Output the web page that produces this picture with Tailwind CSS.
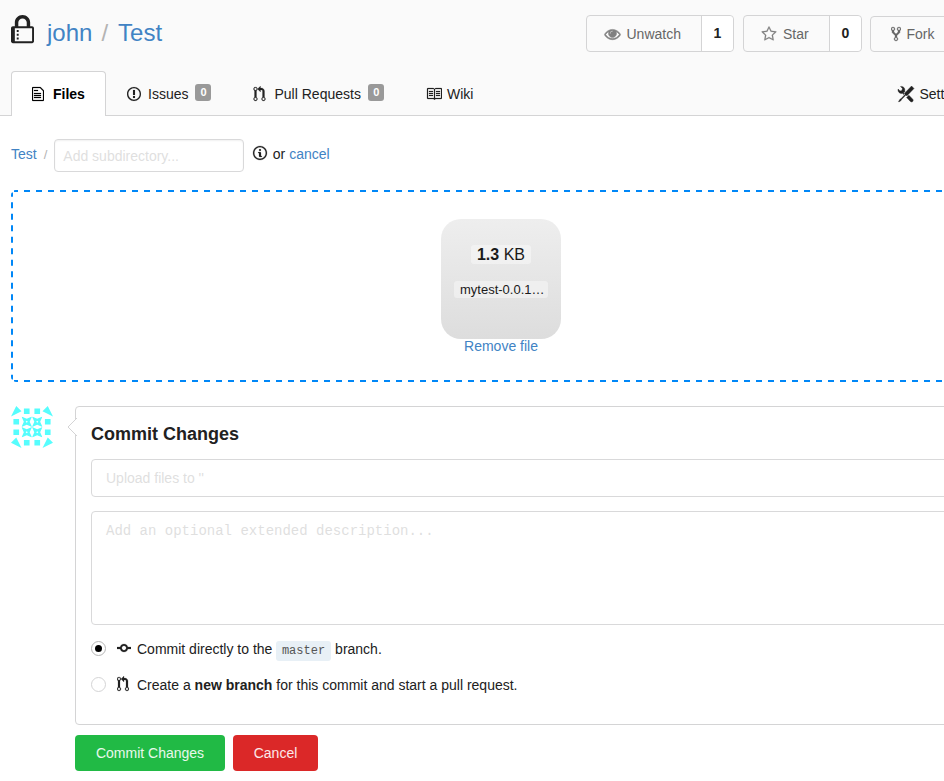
<!DOCTYPE html>
<html lang="en">
<head>
<meta charset="utf-8">
<title>john/Test</title>
<script src="https://cdn.jsdelivr.net/npm/@tailwindcss/browser@4"></script>
</head>
<body class="h-[781px] w-[944px] overflow-hidden bg-white font-['Liberation_Sans',Arial,sans-serif] text-[14px] leading-5 text-[#212121]">
<svg class="hidden">
  <symbol id="pr" viewBox="0 0 12 16"><path d="M11 11.28V5c-.03-.78-.34-1.47-.94-2.06C9.46 2.35 8.78 2.03 8 2H7V0L4 3l3 3V4h1c.27.02.48.11.69.31.21.2.3.42.31.69v6.28A1.993 1.993 0 0 0 10 15a1.993 1.993 0 0 0 1-3.72zm-1 2.92c-.66 0-1.2-.55-1.2-1.2 0-.65.55-1.2 1.2-1.2.65 0 1.2.55 1.2 1.2 0 .65-.55 1.2-1.2 1.2zM4 3c0-1.11-.89-2-2-2a1.993 1.993 0 0 0-1 3.72v6.56A1.993 1.993 0 0 0 2 15a1.993 1.993 0 0 0 1-3.72V4.72c.59-.34 1-.98 1-1.72zm-.8 10c0 .66-.55 1.2-1.2 1.2-.65 0-1.2-.55-1.2-1.2 0-.65.55-1.2 1.2-1.2.65 0 1.2.55 1.2 1.2zM2 4.2C1.34 4.2.8 3.65.8 3c0-.65.55-1.2 1.2-1.2.65 0 1.2.55 1.2 1.2 0 .65-.55 1.2-1.2 1.2z"/></symbol>
  <symbol id="xcell" viewBox="0 0 10 10"><path fill-rule="evenodd" d="M0 0L5 2.2L10 0L7.8 5L10 10L5 7.8L0 10L2.2 5ZM5 4L4 5L5 6L6 5Z"/></symbol>
</svg>

<header class="h-[116px] border-b border-[#d4d4d5] bg-[#fafafa] pl-[11px]">
  <div class="flex h-[71px] w-[1000px] items-start pt-[14px]">
    <svg class="mt-px h-[30px] w-[23px] shrink-0 fill-current" viewBox="0 0 12 16" preserveAspectRatio="none"><path d="M4 13H3v-1h1v1zm8-6v7c0 .55-.45 1-1 1H1c-.55 0-1-.45-1-1V7c0-.55.45-1 1-1h1V4c0-2.2 1.8-4 4-4s4 1.8 4 4v2h1c.55 0 1 .45 1 1zM3.8 6h4.41V4c0-1.22-.98-2.2-2.2-2.2-1.22 0-2.2.98-2.2 2.2v2H3.8zM11 7H2v7h9V7zM4 8H3v1h1V8zm0 2H3v1h1v-1z"/></svg>
    <h1 class="ml-[13px] flex w-[539px] pt-[2px] text-[24px] leading-[34px] text-[#4183c4]"><a>john</a><span class="mr-[10px] ml-[9px] text-[#b3b3b3]">/</span><a>Test</a></h1>
    <div class="mt-px flex h-[37px] w-[148px] shrink-0 rounded border border-[#d4d4d5] text-[#666]">
      <div class="flex flex-1 items-center pl-[17px]"><svg class="mr-[5.5px] h-4 w-[17px] overflow-visible fill-[#808080] stroke-[#808080] stroke-60" viewBox="0 0 1792 1792"><path d="M1664 960q-152-236-381-353 61 104 61 225 0 185-131.5 316.5t-316.5 131.5-316.5-131.5-131.5-316.5q0-121 61-225-229 117-381 353 133 205 333.5 326.5t434.5 121.5 434.5-121.5 333.5-326.5zm-720-384q0-20-14-34t-34-14q-125 0-214.5 89.5t-89.5 214.5q0 20 14 34t34 14 34-14 14-34q0-86 61-147t147-61q20 0 34-14t14-34zm848 384q0 34-20 69-140 230-376.5 368.5t-499.5 138.5-499.5-139-376.5-368q-20-35-20-69t20-69q140-229 376.5-368t499.5-139 499.5 139 376.5 368q20 35 20 69z"/></svg>Unwatch</div>
      <div class="w-[32px] rounded-r border-l border-[#d4d4d5] bg-white text-center font-bold leading-[34px] text-[#212121]">1</div>
    </div>
    <div class="mt-px ml-[9px] flex h-[37px] w-[119px] shrink-0 rounded border border-[#d4d4d5] text-[#666]">
      <div class="flex flex-1 items-center pl-[17px]"><svg class="mr-[6px] h-4 w-4 overflow-visible fill-[#808080] stroke-[#808080] stroke-20" viewBox="0 0 1792 1792"><path d="M1201 1004l306-297-422-62-189-382-189 382-422 62 306 297-73 421 378-199 377 199zm527-357q0 22-26 48l-363 354 86 500q1 7 1 20 0 50-41 50-19 0-40-12l-449-236-449 236q-22 12-40 12-21 0-31.5-14.5t-10.5-35.5q0-6 2-20l86-500-364-354q-25-27-25-48 0-37 56-46l502-73 225-455q19-41 49-41t49 41l225 455 502 73q56 9 56 46z"/></svg>Star</div>
      <div class="w-[32px] rounded-r border-l border-[#d4d4d5] bg-white text-center font-bold leading-[34px] text-[#212121]">0</div>
    </div>
    <div class="mt-[2px] ml-2 flex h-9 w-[110px] shrink-0 items-center rounded border border-[#d4d4d5] pl-5 text-[#666]"><svg class="mr-[5.5px] h-[16px] w-[10px] fill-current stroke-current stroke-[0.3]" viewBox="0 0 10 16"><path d="M8 1a1.993 1.993 0 0 0-1 3.72V6L5 8 3 6V4.72A1.993 1.993 0 0 0 2 1a1.993 1.993 0 0 0-1 3.72V6.5l3 3v1.78A1.993 1.993 0 0 0 5 15a1.993 1.993 0 0 0 1-3.72V9.5l3-3V4.72A1.993 1.993 0 0 0 8 1zM2 4.2C1.34 4.2.8 3.65.8 3c0-.65.55-1.2 1.2-1.2.65 0 1.2.55 1.2 1.2 0 .65-.55 1.2-1.2 1.2zm3 10c-.66 0-1.2-.55-1.2-1.2 0-.65.55-1.2 1.2-1.2.65 0 1.2.55 1.2 1.2 0 .65-.55 1.2-1.2 1.2zm3-10c-.66 0-1.2-.55-1.2-1.2 0-.65.55-1.2 1.2-1.2.65 0 1.2.55 1.2 1.2 0 .65-.55 1.2-1.2 1.2z"/></svg>Fork</div>
  </div>
  <nav class="flex h-[45px] w-[1000px] items-center whitespace-nowrap">
    <a class="flex h-[45px] w-[95px] items-center rounded-t border border-b-0 border-[#d4d4d5] bg-white pl-5 font-bold text-black"><svg class="mr-[9px] h-4 w-3 fill-current stroke-current stroke-[0.2]" viewBox="0 0 12 16"><path d="M6 5H2V4h4v1zM2 8h7V7H2v1zm0 2h7V9H2v1zm0 2h7v-1H2v1zm10-7.5V14c0 .55-.45 1-1 1H1c-.55 0-1-.45-1-1V2c0-.55.45-1 1-1h7.5L12 4.5zM11 5L8 2H1v12h10V5z"/></svg>Files</a>
    <a class="ml-[21px] flex w-[126px] items-center"><svg class="mr-[7px] h-4 w-[14px] fill-current stroke-current stroke-[0.1]" viewBox="0 0 14 16"><path d="M7 2.3c3.14 0 5.7 2.56 5.7 5.7s-2.56 5.7-5.7 5.7A5.71 5.71 0 0 1 1.3 8c0-3.14 2.56-5.7 5.7-5.7zM7 1C3.14 1 0 4.14 0 8s3.14 7 7 7 7-3.14 7-7-3.14-7-7-7zm1 3H6v5h2V4zm0 6H6v2h2v-2z"/></svg>Issues<span class="mb-[3px] ml-[7px] h-[17px] w-4 rounded-[3px] bg-[#999] text-center text-[11px] font-bold leading-[17px] text-white">0</span></a>
    <a class="flex w-[173px] items-center"><svg class="mr-[8.5px] h-4 w-[13px] fill-current stroke-current stroke-[0.2]"><use href="#pr"/></svg>Pull Requests<span class="mb-[3px] ml-[7.5px] h-[17px] w-4 rounded-[3px] bg-[#999] text-center text-[11px] font-bold leading-[17px] text-white">0</span></a>
    <a class="flex w-[472px] items-center"><svg class="mr-[5px] h-4 w-4 fill-current stroke-current stroke-[0.2]" viewBox="0 0 16 16"><path d="M3 5h4v1H3V5zm0 3h4V7H3v1zm0 2h4V9H3v1zm11-5h-4v1h4V5zm0 2h-4v1h4V7zm0 2h-4v1h4V9zm2-6v9c0 .55-.45 1-1 1H9.5l-1 1-1-1H2c-.55 0-1-.45-1-1V3c0-.55.45-1 1-1h5.5l1 1 1-1H15c.55 0 1 .45 1 1zm-8 .5L7.5 3H2v9h6V3.5zm7-.5H9.5l-.5.5V12h6V3z"/></svg>Wiki</a>
    <a class="flex items-center"><svg class="mr-[5.5px] h-4 w-4 overflow-visible fill-current stroke-current stroke-[0.4]" viewBox="0 0 16 16"><path d="M4.48 7.27c.26.26 1.28 1.33 1.28 1.33l.56-.58-.88-.91 1.69-1.8s-.76-.74-.43-.45c.32-1.19.03-2.51-.87-3.44C4.93.5 3.66.2 2.52.51l1.93 2-.51 1.96-1.89.52-1.93-1.99C-.19 4.17.1 5.48 1 6.4c.94.98 2.29 1.26 3.48.87zm6.44 1.94l-2.33 2.3 3.84 3.98c.31.33.73.49 1.14.49.41 0 .82-.16 1.14-.49.63-.65.63-1.7 0-2.35l-3.79-3.93zM16 2.53L13.55 0 6.33 7.46l.88.91-4.31 4.46-.99.53-1.39 2.27.35.37 2.2-1.44.51-1.02L7.9 9.08l.88.91L16 2.53z"/></svg>Settings</a>
  </nav>
</header>

<main class="w-[1000px] pl-[11px]">
  <div class="flex h-[74px] items-start pt-[23px]">
    <div class="flex leading-[31px] text-[#4183c4]">Test<span class="mx-[7px] text-[13px] text-[#b3b3b3]">/</span></div>
    <div class="h-[33px] w-[190px] rounded border border-[#d9d9da] pl-2 leading-[32px] text-[#dfdfdf] shadow-[inset_0_1px_2px_rgba(0,0,0,0.06)]">Add subdirectory...</div>
    <svg class="mt-[6px] mr-[5.5px] ml-[9px] h-4 w-[14px] overflow-visible fill-current stroke-current stroke-[0.2]" viewBox="0 0 14 16"><path d="M6.3 5.69a.942.942 0 0 1-.28-.7c0-.28.09-.52.28-.7.19-.18.42-.28.7-.28.28 0 .52.09.7.28.18.19.28.42.28.7 0 .28-.09.52-.28.7a1 1 0 0 1-.7.3c-.28 0-.52-.11-.7-.3zM8 7.99c-.02-.25-.11-.48-.31-.69-.2-.19-.42-.3-.69-.31H6c-.27.02-.48.13-.69.31-.2.2-.3.44-.31.69h1v3c.02.27.11.5.31.69.2.2.42.31.69.31h1c.27 0 .48-.11.69-.31.2-.19.3-.42.31-.69H8V7.98v.01zM7 2.3c-3.14 0-5.7 2.54-5.7 5.68 0 3.14 2.56 5.7 5.7 5.7s5.7-2.55 5.7-5.7c0-3.15-2.56-5.69-5.7-5.69v.01zM7 .98c3.86 0 7 3.14 7 7s-3.14 7-7 7-7-3.12-7-7 3.14-7 7-7z"/></svg>
    <div class="leading-[31px]">or <span class="text-[#4183c4]">cancel</span></div>
  </div>
  <div class="relative flex h-[192px] w-[980px] flex-col items-center overflow-hidden rounded-[5px] pt-[29px]">
    <svg class="absolute inset-0 h-[192px] w-[980px] fill-none stroke-[#0087f7] stroke-2"><path d="M3 1H980M3 191H980" stroke-dasharray="6 6" stroke-dashoffset="2"/><path d="M1 2.5V189.5" stroke-dasharray="6 5.5" stroke-dashoffset="1.75"/></svg>
    <div class="flex h-[120px] w-[120px] flex-col items-center rounded-[20px] bg-linear-to-b from-[#eee] to-[#ddd] pt-[26px]">
      <div class="h-[19px] rounded-[3px] bg-white/40 px-[6px] text-[16px] leading-[19px] text-[#1a1a1a]"><b>1.3</b> KB</div>
      <div class="mt-[17px] h-[17px] w-[94px] rounded-[3px] bg-white/40 pl-[6px] text-[13px] leading-[17px] text-[#1a1a1a]">mytest-0.0.1…</div>
    </div>
    <a class="leading-[14px] text-[#4183c4]">Remove file</a>
  </div>
  <div class="mt-6 flex">
    <svg class="h-[42px] w-[42px] shrink-0 fill-[#56fdfd]" viewBox="0 0 40 40">
      <path d="M0 10L5 0L10 5ZM30 5L35 0L40 10ZM0 35L5 30L10 40ZM30 40L35 30L40 35ZM12.3 2.3h5.4v5.4h-5.4zM22.3 2.3h5.4v5.4h-5.4zM12.3 32.3h5.4v5.4h-5.4zM22.3 32.3h5.4v5.4h-5.4zM2.3 12.3h5.4v5.4h-5.4zM2.3 22.3h5.4v5.4h-5.4zM32.3 12.3h5.4v5.4h-5.4zM32.3 22.3h5.4v5.4h-5.4z"/>
      <use href="#xcell" x="10" y="10" width="10" height="10"/><use href="#xcell" x="20" y="10" width="10" height="10"/><use href="#xcell" x="10" y="20" width="10" height="10"/><use href="#xcell" x="20" y="20" width="10" height="10"/>
    </svg>
    <div class="ml-[22px]">
      <section class="relative h-[319px] w-[917px] rounded border border-[#d4d4d5] px-[15px] pt-[16px]">
        <svg class="absolute top-[11px] left-[-9px] h-[18px] w-[10px]" viewBox="0 0 10 18"><path d="M10 0L1 9L10 18" fill="#fff" stroke="#d4d4d5"/></svg>
        <h3 class="text-[18px] font-bold leading-[22px]">Commit Changes</h3>
        <div class="mt-[14px] h-[38px] rounded border border-[#d9d9da] pl-[14px] leading-[36px] text-[#dfdfdf]">Upload files to ''</div>
        <div class="mt-[14px] h-[114px] rounded border border-[#d9d9da] pt-[9px] pl-[14px] font-['Liberation_Mono',monospace] text-[14px] text-[#dfdfdf]">Add an optional extended description...</div>
        <div class="mt-[14px] flex h-5 items-center">
          <span class="mb-[2px] flex h-[15px] w-[15px] items-center justify-center rounded-full border border-[#b5b5b5]"><i class="h-[7px] w-[7px] rounded-full bg-black"></i></span>
          <svg class="mb-[2px] ml-[11px] h-4 w-[14px] fill-current stroke-current stroke-[0.2]" viewBox="0 0 14 16"><path d="M10.86 7c-.45-1.72-2-3-3.86-3-1.86 0-3.41 1.28-3.86 3H0v2h3.14c.45 1.72 2 3 3.86 3 1.86 0 3.41-1.28 3.86-3H14V7h-3.14zM7 10.2c-1.22 0-2.2-.98-2.2-2.2 0-1.22.98-2.2 2.2-2.2 1.22 0 2.2.98 2.2 2.2 0 1.22-.98 2.2-2.2 2.2z"/></svg>
          <span class="ml-[6px]">Commit directly to the</span><code class="mr-1 ml-[3.5px] mt-[3px] h-5 rounded-[3px] bg-[#e8f0f6] px-[6px] font-['Liberation_Mono',monospace] text-[12px] leading-[20px] text-[#555]">master</code><span>branch.</span>
        </div>
        <div class="mt-4 flex h-5 items-center">
          <span class="mb-[2px] h-[15px] w-[15px] rounded-full border border-[#d4d4d5]"></span>
          <svg class="mr-[2px] mb-[2px] ml-[11px] h-4 w-[12px] fill-current stroke-current stroke-[0.2]"><use href="#pr"/></svg>
          <span class="ml-[6px]">Create a <b>new branch</b> for this commit and start a pull request.</span>
        </div>
      </section>
      <div class="mt-[10px] flex gap-2 text-center leading-9 text-white/90">
        <div class="h-9 w-[150px] rounded bg-[#21ba45]">Commit Changes</div>
        <div class="h-9 w-[85px] rounded bg-[#db2828]">Cancel</div>
      </div>
    </div>
  </div>
</main>
</body>
</html>
